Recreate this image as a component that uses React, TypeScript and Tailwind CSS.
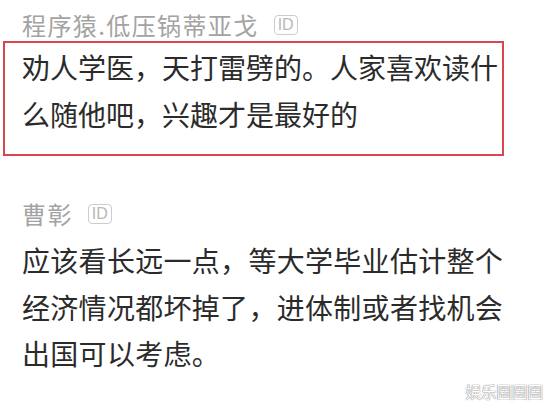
import React from "react";

const cjk = "font-['Noto_Sans_CJK_SC','Noto_Sans',sans-serif]";

function IdBadge() {
  return (
    <span className="ml-[15px] flex h-[20px] w-[24px] items-center justify-center rounded-[4px] border-[1.5px] border-[#cccccc] font-['Liberation_Sans',sans-serif] text-[16px] leading-none text-[#b8b8b8]">
      ID
    </span>
  );
}

function Author({ name }: { name: string }) {
  return (
    <div className="flex h-[30px] items-center pl-[22px]">
      <span className="text-[24px] leading-[30px] tracking-[1.4px] text-[#a3a3a3]">{name}</span>
      <IdBadge />
    </div>
  );
}

export default function App() {
  return (
    <div className={`relative h-[410px] w-[556px] overflow-hidden bg-white ${cjk}`}>
      <div className="pt-[10px]">
        <Author name="程序猿.低压锅蒂亚戈" />
      </div>

      <div className="ml-[3px] mt-[1px] w-[501px] border-2 border-[#d9464f] pb-[16px] pl-[17px] pt-[1px]">
        <p className="text-[28px] leading-[47px] text-[#2b2b2b]">
          劝人学医，天打雷劈的。人家喜欢读什么随他吧，兴趣才是最好的
        </p>
      </div>

      <div className="mt-[43px]">
        <Author name="曹彰" />
      </div>

      <p className="mt-[8px] w-[512px] pl-[22px] text-[28px] leading-[46.5px] tracking-[0.3px] text-[#2b2b2b]">
        应该看长远一点，等大学毕业估计整个经济情况都坏掉了，进体制或者找机会出国可以考虑。
      </p>

      <span className="absolute bottom-[11px] right-[13px] text-[15.5px] leading-none text-white [text-shadow:0_0_1px_#7a7a7a,0_0_1px_#7a7a7a]">
        娱乐圈圈圈
      </span>
    </div>
  );
}
